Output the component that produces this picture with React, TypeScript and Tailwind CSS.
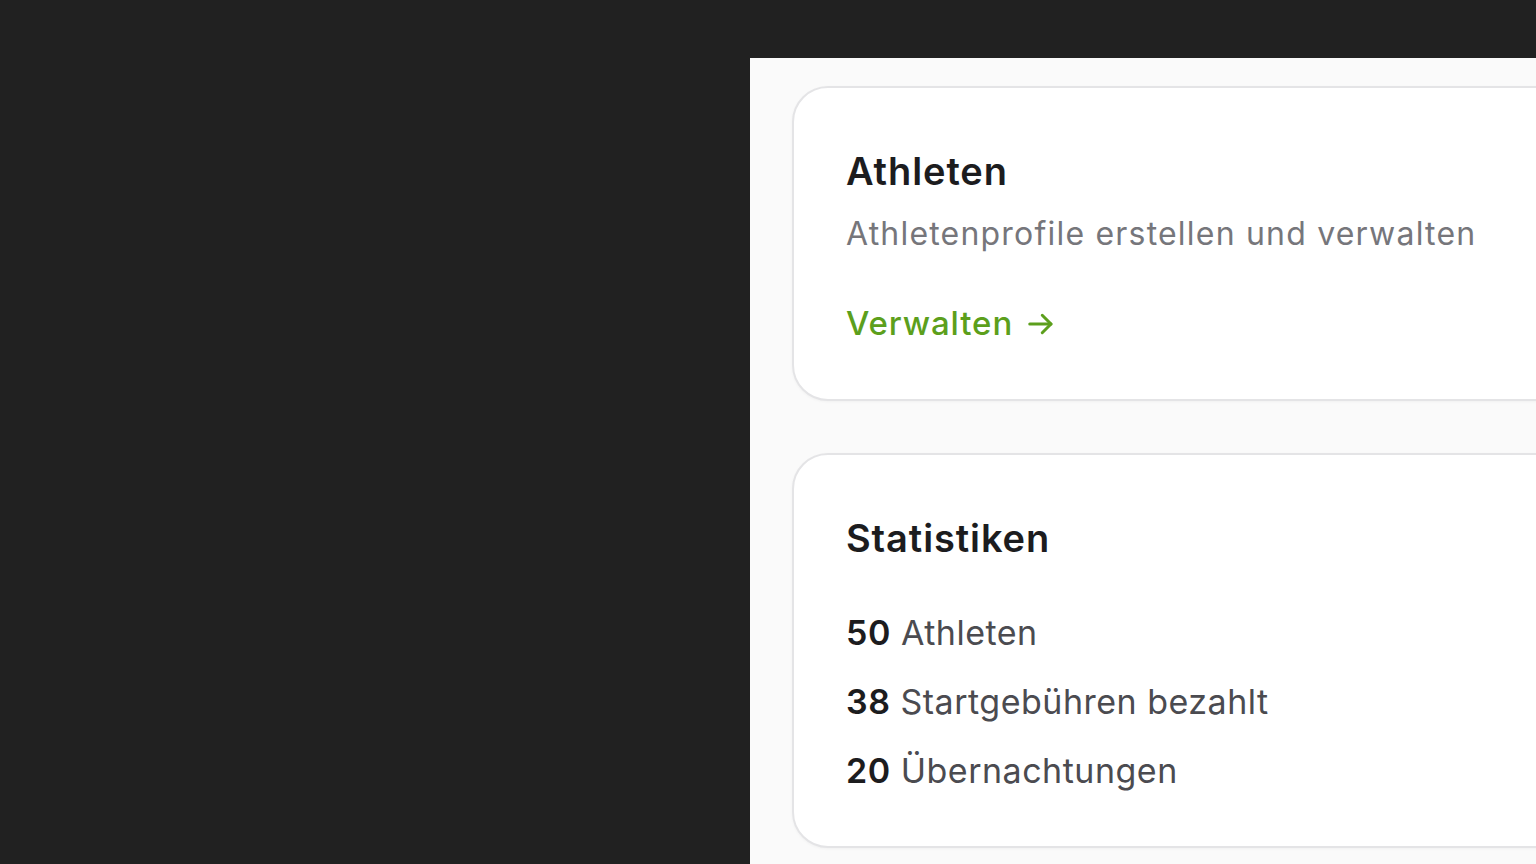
import React from "react";

export default function App() {
  const font = { fontFamily: "Inter, 'Noto Sans', 'Liberation Sans', sans-serif" };
  return (
    <div className="w-[1536px] h-[864px] bg-[#212121] flex overflow-hidden" style={font}>
      <div className="w-[750px] shrink-0" />
      <div className="flex-1 mt-[58px] bg-[#fafafa] overflow-hidden pl-[42px] pt-[28px]">
        <div className="w-[1000px] flex flex-col gap-[52px]">
          <div className="bg-white border-2 border-[#e4e4e6] rounded-[36px] pl-[52px] pt-[59px] pb-[56px] shadow-[0_1px_3px_rgba(0,0,0,0.04)]">
            <h2 className="text-[38px] leading-[48px] font-semibold text-[#1c1c1e] tracking-[0.9px]">Athleten</h2>
            <p className="mt-[19px] text-[32px] leading-[40px] text-[#76767b] tracking-[1.2px]">
              Athletenprofile erstellen und verwalten
            </p>
            <div className="mt-[49px] flex items-center gap-[13px] text-[#5c9f1c] h-[40px]">
              <span className="text-[33px] leading-[40px] font-medium tracking-[0.9px]">Verwalten</span>
              <svg width="30" height="30" viewBox="0 0 24 24" fill="none" stroke="currentColor" strokeWidth="2.4" strokeLinecap="round" strokeLinejoin="round" className="mt-[2px]">
                <path d="M3 12h17" />
                <path d="M13 5l7 7-7 7" />
              </svg>
            </div>
          </div>
          <div className="bg-white border-2 border-[#e4e4e6] rounded-[36px] pl-[52px] pt-[59px] pb-[53px] shadow-[0_1px_3px_rgba(0,0,0,0.04)]">
            <h2 className="text-[38px] leading-[48px] font-semibold text-[#1c1c1e] tracking-[0.9px]">Statistiken</h2>
            <div className="mt-[49px] flex flex-col gap-[25px]">
              {[
                ["50", "Athleten"],
                ["38", "Startgebühren bezahlt"],
                ["20", "Übernachtungen"],
              ].map(([n, l]) => (
                <div key={l} className="text-[34px] leading-[44px] tracking-[0.5px]">
                  <span className="font-semibold text-[#1c1c1e]">{n}</span>{" "}
                  <span className="text-[#4b4b50]">{l}</span>
                </div>
              ))}
            </div>
          </div>
        </div>
      </div>
    </div>
  );
}
